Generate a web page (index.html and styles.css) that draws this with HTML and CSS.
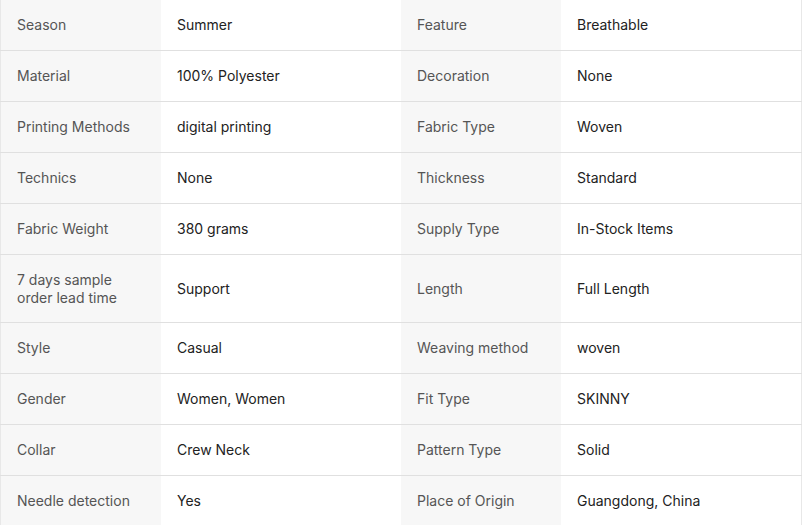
FILE: index.html
```html
<!DOCTYPE html>
<html>
<head>
<meta charset="utf-8">
<link rel="stylesheet" href="styles.css">
</head>
<body>
<table class="attrs">
  <tbody>
    <tr><td class="k">Season</td><td class="v">Summer</td><td class="k">Feature</td><td class="v">Breathable</td></tr>
    <tr><td class="k">Material</td><td class="v">100% Polyester</td><td class="k">Decoration</td><td class="v">None</td></tr>
    <tr><td class="k">Printing Methods</td><td class="v">digital printing</td><td class="k">Fabric Type</td><td class="v">Woven</td></tr>
    <tr><td class="k">Technics</td><td class="v">None</td><td class="k">Thickness</td><td class="v">Standard</td></tr>
    <tr><td class="k">Fabric Weight</td><td class="v">380 grams</td><td class="k">Supply Type</td><td class="v">In-Stock Items</td></tr>
    <tr class="tall"><td class="k">7 days sample order lead time</td><td class="v">Support</td><td class="k">Length</td><td class="v">Full Length</td></tr>
    <tr><td class="k">Style</td><td class="v">Casual</td><td class="k">Weaving method</td><td class="v">woven</td></tr>
    <tr><td class="k">Gender</td><td class="v">Women, Women</td><td class="k">Fit Type</td><td class="v">SKINNY</td></tr>
    <tr><td class="k">Collar</td><td class="v">Crew Neck</td><td class="k">Pattern Type</td><td class="v">Solid</td></tr>
    <tr><td class="k">Needle detection</td><td class="v">Yes</td><td class="k">Place of Origin</td><td class="v">Guangdong, China</td></tr>
  </tbody>
</table>
</body>
</html>
```
FILE: styles.css
```css
html, body {
  margin: 0;
  padding: 0;
  background: #fff;
}
body {
  font-family: Inter, "Noto Sans", sans-serif;
  font-size: 14px;
}
.attrs {
  width: 802px;
  border-collapse: collapse;
  table-layout: fixed;
  border-left: 1px solid #e8e8e8;
  border-right: 1px solid #e8e8e8;
}
.attrs td {
  border-bottom: 1px solid #e0e0e0;
  padding: 16px;
  line-height: 18px;
  vertical-align: middle;
  height: 18px;
}
.attrs .tall td {
  padding: 16px 16px 15.25px;
}
.attrs td:nth-child(1) { width: 128px; }
.attrs td:nth-child(2) { width: 208px; }
.attrs td:nth-child(3) { width: 128px; }
.k {
  background: #f7f7f7;
  color: #555;
}
.v {
  background: #fff;
  color: #222;
}
```
